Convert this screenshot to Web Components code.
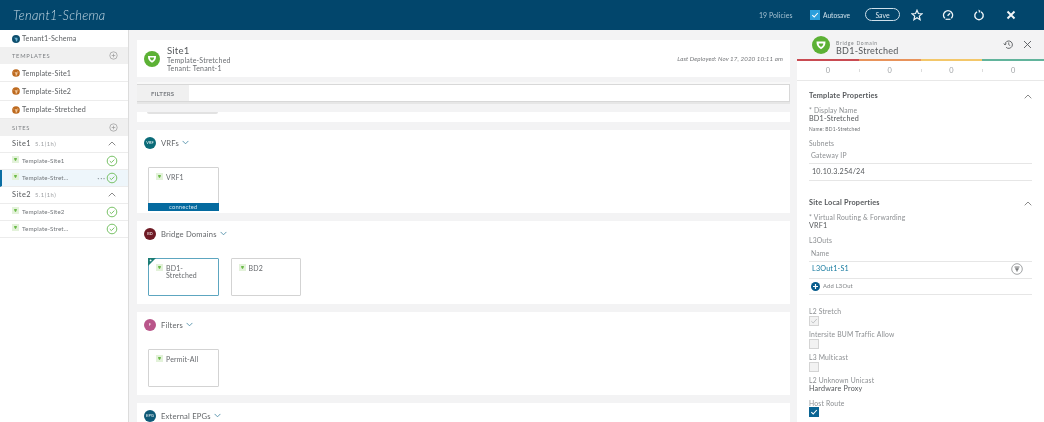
<!doctype html>
<html><head><meta charset="utf-8"><style>
html,body{margin:0;padding:0;height:100%;overflow:hidden;background:#f3f3f4}
body{font-family:Lato,"Open Sans",sans-serif;color:#58585b}
</style></head><body>
<app-shell>
  <top-bar slot="top"></top-bar>
  <side-nav slot="nav">
    <nav-row kind="root" icon="root">Tenant1-Schema</nav-row>
    <nav-head>TEMPLATES</nav-head>
    <nav-row kind="tpl" icon="tpl">Template-Site1</nav-row>
    <nav-row kind="tpl" icon="tpl">Template-Site2</nav-row>
    <nav-row kind="tpl" icon="tpl">Template-Stretched</nav-row>
    <nav-head>SITES</nav-head>
    <nav-site ver="5.1(1h)">Site1</nav-site>
    <nav-row kind="sub" icon="pin" check>Template-Site1</nav-row>
    <nav-row kind="sub" icon="pin" check selected>Template-Stret...</nav-row>
    <nav-site ver="5.1(1h)">Site2</nav-site>
    <nav-row kind="sub" icon="pin" check>Template-Site2</nav-row>
    <nav-row kind="sub" icon="pin" check>Template-Stret...</nav-row>
  </side-nav>
  <main-view slot="main">
    <site-card></site-card>
    <filter-bar></filter-bar>
    <clip-card></clip-card>
    <policy-section label="VRFs" badge="VRF" color="#0b6b78">
      <policy-tile status="connected">VRF1</policy-tile>
    </policy-section>
    <policy-section label="Bridge Domains" badge="BD" color="#6e1a24">
      <policy-tile active>BD1-<br>Stretched</policy-tile>
      <policy-tile>BD2</policy-tile>
    </policy-section>
    <policy-section label="Filters" badge="F" color="#b9558a">
      <policy-tile>Permit-All</policy-tile>
    </policy-section>
    <policy-section label="External EPGs" badge="EPG" color="#0f5a78">
      <policy-tile>&nbsp;</policy-tile>
    </policy-section>
  </main-view>
  <detail-panel slot="side">
    <prop-line kind="title" style="--mt:0px" chevron>Template Properties</prop-line>
    <prop-line kind="label" style="--mt:6px">* Display Name</prop-line>
    <prop-line kind="value" style="--mt:1px">BD1-Stretched</prop-line>
    <prop-line kind="tiny" style="--mt:2px">Name: BD1-Stretched</prop-line>
    <prop-line kind="label" style="--mt:6px">Subnets</prop-line>
    <prop-line kind="label" inset style="--mt:4px">Gateway IP</prop-line>
    <prop-rule style="--mt:4px"></prop-rule>
    <prop-line kind="value" inset2 style="--mt:4px">10.10.3.254/24</prop-line>
    <prop-rule style="--mt:4px"></prop-rule>
    <prop-line kind="title" style="--mt:18px" chevron>Site Local Properties</prop-line>
    <prop-line kind="label" style="--mt:6px">* Virtual Routing &amp; Forwarding</prop-line>
    <prop-line kind="value" style="--mt:1px">VRF1</prop-line>
    <prop-line kind="label" style="--mt:6px">L3Outs</prop-line>
    <prop-line kind="label" inset style="--mt:5px">Name</prop-line>
    <prop-rule style="--mt:4px"></prop-rule>
    <prop-line kind="link" inset2 trash style="--mt:3px">L3Out1-S1</prop-line>
    <prop-rule style="--mt:5px"></prop-rule>
    <prop-line kind="add" style="--mt:3px">Add L3Out</prop-line>
    <prop-rule style="--mt:4px"></prop-rule>
    <prop-line kind="label" style="--mt:12px">L2 Stretch</prop-line>
    <prop-check state="dis" style="--mt:1px"></prop-check>
    <prop-line kind="label" style="--mt:4px">Intersite BUM Traffic Allow</prop-line>
    <prop-check style="--mt:1px"></prop-check>
    <prop-line kind="label" style="--mt:4px">L3 Multicast</prop-line>
    <prop-check style="--mt:1px"></prop-check>
    <prop-line kind="label" style="--mt:4px">L2 Unknown Unicast</prop-line>
    <prop-line kind="value" style="--mt:1px">Hardware Proxy</prop-line>
    <prop-line kind="label" style="--mt:6px">Host Route</prop-line>
    <prop-check state="on" style="--mt:0px"></prop-check>
  </detail-panel>
</app-shell>
<script>
const shield=(s,c='#5cb135')=>`<svg width="${s}" height="${s}" viewBox="0 0 20 20"><circle cx="10" cy="10" r="10" fill="${c}"/><path d="M5 6.200c3.400 0 6.600 0 10 0 .3 4-1.600 6.900-5 8.400C6.600 13.100 4.700 10.200 5 6.200z" fill="#fff"/><path d="M7.400 8.200h5.200c0 1.800-.9 3-2.600 3.900-1.700-.9-2.600-2.100-2.600-3.900z" fill="${c}"/></svg>`;
const chevron=(d,c='#7a8a94',w=8)=>`<svg width="${w}" height="5" viewBox="0 0 8 5" style="display:block"><path d="${d==='up'?'M.7 4.300 4 1l3.300 3.300':'M.7.700 4 4 7.300.700'}" fill="none" stroke="${c}" stroke-width="1"/></svg>`;
const icons={
 root:`<svg width="8" height="8" viewBox="0 0 10 10"><circle cx="5" cy="5" r="5" fill="#0e4f6e"/><path d="M1 3.500C3 3 5 5 5 8.500c2-1 2.500-3.500 1.500-5" fill="#6fb6d6"/></svg>`,
 tpl:`<svg width="8" height="8" viewBox="0 0 10 10"><circle cx="5" cy="5" r="4.800" fill="#bd6a1f"/><path d="M.8 3.600C3 3 4.700 5 4.800 8.800 6.800 8 7.500 5 6.400 2.900L9 4" fill="#f0c69a"/></svg>`,
 pin:`<svg width="7" height="7" viewBox="0 0 10 10" style="display:block"><rect width="10" height="10" fill="#e3f2da"/><path d="M3 2.800h4c0 1.900-.7 3.300-2 4.300-1.300-1-2-2.400-2-4.300z" fill="#6bbb48"/></svg>`,
 check:`<svg width="12" height="12" viewBox="0 0 12 12" style="display:block"><circle cx="6" cy="6" r="4.800" fill="none" stroke="#79c267" stroke-width="1"/><path d="M3.800 6.100 5.400 7.600 8.300 4.600" fill="none" stroke="#79c267" stroke-width="1"/></svg>`
};
function def(name,html){
  const t=document.createElement('template');
  if(typeof html!=='function')t.innerHTML=html;
  customElements.define(name,class extends HTMLElement{
    connectedCallback(){
      if(this.shadowRoot)return;
      const r=this.attachShadow({mode:'open'});
      if(typeof html==='function'){r.innerHTML=html(this)}else{r.appendChild(t.content.cloneNode(true))}
    }
  });
}
def('app-shell',`<style>
:host{display:grid;grid-template-columns:129px 668px 247px;grid-template-rows:30px 392px;width:1044px;height:422px;overflow:hidden;filter:blur(.42px)}
.t{grid-column:1/4}
</style><div class="t"><slot name="top"></slot></div><slot name="nav"></slot><slot name="main"></slot><slot name="side"></slot>`);

def('top-bar',`<style>
:host{display:flex;align-items:center;height:30px;background:#02466c;color:#cfe0ea;box-sizing:border-box;padding:0 28px 1px 13px;font:6.900px Lato,sans-serif}
.title{font:italic 300 12.800px Lato,sans-serif;letter-spacing:.3px;color:#c9dbe6;flex:1;padding-top:1px}
.p{width:51px;letter-spacing:.1px;color:#a8c2d2}
.cb{width:10px;height:10px;background:#2b9fdc;display:flex;align-items:center;justify-content:center;margin-right:3px}
.a{width:42px;color:#cfe0ea;font-size:6.600px}
.save{width:35px;height:13px;box-sizing:border-box;border:1px solid #cfe0ea;border-radius:7px;display:flex;align-items:center;justify-content:center;margin-right:11px;color:#dbe7ee}
.i{width:31px;display:flex;justify-content:flex-start}
.i svg{display:block}
</style>
<div class="title">Tenant1-Schema</div>
<div class="p">19 Policies</div>
<div class="cb"><svg width="8" height="8" viewBox="0 0 8 8"><path d="M1.300 4.200 3.200 6 6.800 2" fill="none" stroke="#fff" stroke-width="1.100"/></svg></div>
<div class="a">Autosave</div>
<div class="save">Save</div>
<div class="i"><svg width="12" height="12" viewBox="0 0 12 12"><path d="M6 1.200 7.400 4.500 11 4.800 8.300 7.100 9.100 10.700 6 8.800 2.900 10.700 3.700 7.100 1 4.800 4.600 4.500z" fill="none" stroke="#eef4f7" stroke-width="1.200"/></svg></div>
<div class="i"><svg width="12" height="12" viewBox="0 0 12 12"><path d="M2.800 9.300A4.500 4.500 0 1 1 9.300 9.300" fill="none" stroke="#eef4f7" stroke-width="1.500"/><path d="M3.500 10.300h5" stroke="#eef4f7" stroke-width="1.200"/><path d="M5.600 6.700 8 4.300" stroke="#eef4f7" stroke-width="1.400"/></svg></div>
<div class="i" style="width:33px"><svg width="12" height="12" viewBox="0 0 12 12"><path d="M4 2.800A4.200 4.200 0 1 0 8 2.800" fill="none" stroke="#eef4f7" stroke-width="1.400"/><path d="M5.400.6 7.700 2.100 6 4z" fill="#eef4f7"/></svg></div>
<div class="i" style="width:10px"><svg width="10" height="10" viewBox="0 0 10 10"><path d="M1.500 1.500 8.500 8.500M8.500 1.500 1.500 8.500" stroke="#f2f6f8" stroke-width="1.900"/></svg></div>`);

def('side-nav',`<style>
:host{display:block;height:392px;background:#fff;border-right:1px solid #dcdcdc;box-sizing:border-box}
</style><slot></slot>`);

def('nav-row',h=>{
  const k=h.getAttribute('kind'),sel=h.hasAttribute('selected');
  const H=k==='root'?17:k==='tpl'?18.300:17;
  return `<style>
  :host{display:flex;align-items:center;height:${H}px;box-sizing:border-box;${k==='root'?'':'border-bottom:1px solid #ececec;'}${k==='tpl'?'padding-top:1px;':''}background:${sel?'#eef6fb':'#fff'};${sel?'border-left:2px solid #0a6ea4;':''}padding-left:${sel?10:12}px;padding-right:10px;gap:${k==='sub'?3:2}px;font-size:${k==='sub'?6.200:7.200}px;letter-spacing:.12px;color:${k==='sub'?'#72767a':'#5f6265'}}
  .n{flex:1;white-space:nowrap}.d{color:#7f8a90;letter-spacing:.8px;font-size:8px;margin-right:-3px}
  span.ic{display:flex;width:${k==='sub'?7:8}px;margin-top:${k==='sub'?-2:0}px}
  </style><span class="ic">${icons[h.getAttribute('icon')]}</span><span class="n"><slot></slot></span>${sel?'<span class="d">···</span>':''}${h.hasAttribute('check')?icons.check:''}`;
});

def('nav-head',`<style>
:host{display:flex;align-items:center;justify-content:space-between;height:17px;background:#f0f0f0;padding:0 10px 0 12px;font-size:5.800px;letter-spacing:.7px;color:#7d8084}
svg{display:block}
</style><slot></slot><svg width="9" height="9" viewBox="0 0 9 9"><circle cx="4.500" cy="4.500" r="3.700" fill="none" stroke="#9a9a9a" stroke-width=".7"/><path d="M2.700 4.500h3.600M4.500 2.700v3.600" stroke="#9a9a9a" stroke-width=".7"/></svg>`);

def('nav-site',h=>`<style>
:host{display:flex;align-items:center;height:17px;box-sizing:border-box;border-bottom:1px solid #ececec;padding:0 12px 0 12px;font-size:7.400px;letter-spacing:.5px;color:#55585b}
.v{font-size:5.800px;color:#9a9da0;margin-left:4px;flex:1;letter-spacing:.5px}
</style><slot></slot><span class="v">${h.getAttribute('ver')}</span>${chevron('up','#8a8a8a')}`);

def('main-view',`<style>
:host{display:flex;flex-direction:column;gap:8px;height:392px;overflow:hidden;box-sizing:border-box;padding:10px 7px 0 8px;background:#f3f3f4}
::slotted(*){flex:none}
</style><slot></slot>`);

def('site-card',`<style>
:host{display:flex;align-items:center;height:37px;background:#fff;padding:0 7px 0 7px;gap:7px;margin-bottom:-1px}
svg{display:block}
.x{flex:1;display:flex;flex-direction:column;gap:1px;font-size:7px;letter-spacing:.2px;color:#6b6e72;line-height:7px;margin-top:-1px}
.n{font-size:9.600px;color:#55585b;line-height:11px;letter-spacing:.2px}
.d{font-style:italic;font-size:6.200px;color:#77797c;letter-spacing:.1px}
</style>${shield(16)}<div class="x"><div class="n">Site1</div><div>Template-Stretched</div><div>Tenant: Tenant-1</div></div><div class="d">Last Deployed: Nov 17, 2020 10:11 am</div>`);

def('filter-bar',`<style>
:host{display:flex;height:18px;box-sizing:border-box;border-top:1px solid #d8d8d8;border-bottom:1px solid #d8d8d8;background:#fff;box-shadow:0 2px 0 #e6e6e6,0 -2px 0 #f8f8f8;margin-bottom:2px}
.l{width:52px;background:#f0f0f0;display:flex;align-items:center;padding-left:14px;box-sizing:border-box;font-size:6px;font-weight:700;letter-spacing:.2px;color:#7b7e82}
.i{flex:1;border-right:1px solid #d8d8d8}
</style><div class="l">FILTERS</div><div class="i"></div>`);

def('clip-card',`<style>
:host{display:block;height:10px;background:#fff}
i{display:block;margin-left:10px;width:71px;height:2px;background:#e2e2e2;border-radius:0 0 3px 3px}
</style><i></i>`);

def('policy-section',h=>`<style>
:host{display:flex;flex-direction:column;height:83px;background:#fff;padding:0 11px;box-sizing:border-box}
.h{display:flex;align-items:center;height:25px;gap:5px;margin-left:-4px;font-size:7.600px;letter-spacing:.2px;color:#636669;flex:none}
.b{width:12px;height:12px;border-radius:50%;display:flex;align-items:center;justify-content:center;color:#fff;font-size:3.800px;background:${h.getAttribute('color')}}
.c{margin-left:-2px;display:flex}
.t{display:flex;gap:12px;margin-top:12px;align-items:flex-start}
</style><div class="h"><span class="b">${h.getAttribute('badge')}</span><span>${h.getAttribute('label')}</span><span class="c">${chevron('down','#4f8ea8',7)}</span></div><div class="t"><slot></slot></div>`);

def('policy-tile',h=>{
  const st=h.getAttribute('status'),act=h.hasAttribute('active');
  return `<style>
  :host{display:flex;flex-direction:column;position:relative;width:70.500px;height:${st?44:38}px;box-sizing:border-box;border:1px solid ${act?'#5da6c0':'#d3d3d3'};background:#fff;border-radius:1px;font-size:7px;color:#66696d;letter-spacing:.15px;line-height:6.800px;flex:none}
  .r{flex:1;display:flex;gap:3px;padding:6px 0 0 7px}
  .ic{display:block;flex:none;margin-top:-1px}
  .st{height:8px;background:#046a9f;color:#cfe4ef;font-size:5.800px;line-height:8px;text-align:center;margin:0 -1px -1px;letter-spacing:.2px}
  .cn{position:absolute;left:-1px;top:-1px}
  </style>${act?'<svg class="cn" width="8" height="8" viewBox="0 0 8 8"><path d="M0 0h8L0 8z" fill="#1c7d76"/><circle cx="2.600" cy="2.400" r=".9" fill="#fff"/></svg>':''}<div class="r"><span class="ic">${icons.pin}</span><span><slot></slot></span></div>${st?`<div class="st">${st}</div>`:''}`;
});

def('detail-panel',`<style>
:host{display:flex;flex-direction:column;width:247px;height:392px;background:#fff;overflow:hidden}
.hd{display:flex;align-items:center;height:29px;background:#f3f3f4;padding:0 12px 0 15px;gap:6px;flex:none}
.hd svg{display:block}
.n{flex:1;display:flex;flex-direction:column;line-height:7px;padding-top:6px}
.k{font-size:5px;letter-spacing:.7px;color:#7f8285;line-height:6px}
.v{font-size:9px;letter-spacing:.25px;color:#55585b;line-height:9px}
.bar{display:flex;height:2px;flex:none}.bar i{flex:1}
.st{display:flex;height:19px;border-bottom:1px solid #e8e8e8;box-sizing:content-box;flex:none;font-size:7.400px;color:#a0a3a6}
.st span{flex:1;display:flex;align-items:center;justify-content:center;position:relative}
.st span+span:before{content:"";position:absolute;left:0;top:8px;height:3px;width:1px;background:#dcdcdc}
.b{padding:11px 12px 0;display:flex;flex-direction:column;flex:1}
</style>
<div class="hd">${shield(18)}<div class="n"><span class="k">Bridge Domain</span><span class="v">BD1-Stretched</span></div>
<svg width="11" height="11" viewBox="0 0 11 11"><path d="M2 5.500A3.700 3.700 0 1 1 3.100 8.300" fill="none" stroke="#55585b" stroke-width=".9"/><path d="M.6 4.600 2 6 3.500 4.700" fill="none" stroke="#55585b" stroke-width=".8"/><path d="M5.700 3.400v2.300l1.500.9" fill="none" stroke="#55585b" stroke-width=".8"/></svg>
<svg style="margin-left:3px" width="9" height="9" viewBox="0 0 9 9"><path d="M1 1 8 8M8 1 1 8" stroke="#55585b" stroke-width=".9"/></svg></div>
<div class="bar"><i style="background:#c94b52"></i><i style="background:#e8935b"></i><i style="background:#f3c76a"></i><i style="background:#62b49c"></i></div>
<div class="st"><span>0</span><span>0</span><span>0</span><span>0</span></div>
<div class="b"><slot></slot></div>`);

def('prop-line',h=>{
  const k=h.getAttribute('kind');
  const s={title:'font-size:7.300px;font-weight:700;color:#55585b',label:'font-size:6.750px;color:#8b8e91',value:'font-size:7.200px;color:#55585b',tiny:'font-size:4.900px;color:#6a6d70',link:'font-size:7.200px;color:#167a9f',add:'font-size:5.800px;color:#7f8285'}[k];
  const pad=h.hasAttribute('inset')?'padding-left:2px;':h.hasAttribute('inset2')?'padding-left:3px;':'';
  return `<style>
  :host{display:flex;align-items:center;height:8px;line-height:8px;margin-top:var(--mt,0);flex:none;letter-spacing:.2px;${s};${pad}white-space:nowrap}
  .m{flex:1}svg{display:block}
  .ad{width:9px;height:9px;border-radius:50%;background:#075c8c;display:flex;align-items:center;justify-content:center;margin:0 3px 0 2px}
  </style>${k==='add'?'<span class="ad"><svg width="5" height="5" viewBox="0 0 5 5"><path d="M0 2.500h5M2.500 0v5" stroke="#fff" stroke-width="1.200"/></svg></span>':''}<slot></slot><span class="m"></span>${h.hasAttribute('chevron')?chevron('up','#8a8a8a'):''}${h.hasAttribute('trash')?'<svg style="margin-right:9px;flex:none" width="12" height="12" viewBox="0 0 12 12"><circle cx="6" cy="6" r="5.300" fill="none" stroke="#7a7d80" stroke-width=".7"/><path d="M3.500 4h5M4.200 5.300h3.600M4.600 6.500h2.800M5 7.800h2" fill="none" stroke="#55585b" stroke-width=".8"/></svg>':''}`;
});

def('prop-rule',`<style>:host{display:block;height:1px;background:#e6e6e6;margin-top:var(--mt,0);flex:none}</style>`);

def('prop-check',h=>{
  const st=h.getAttribute('state');
  return `<style>
  :host{display:flex;align-items:center;justify-content:center;width:10px;height:10px;box-sizing:border-box;margin-top:var(--mt,0);flex:none;background:${st==='on'?'#0a6493':'#f2f2f2'};border:1px solid ${st==='on'?'#0a6493':'#d4d4d4'}}
  svg{display:block}
  </style>${st?`<svg width="8" height="8" viewBox="0 0 8 8"><path d="M1.300 4.200 3.200 6 6.800 2" fill="none" stroke="${st==='on'?'#fff':'#b5b8ba'}" stroke-width="${st==='on'?1.100:.8}"/></svg>`:''}`;
});
</script>
</body></html>
